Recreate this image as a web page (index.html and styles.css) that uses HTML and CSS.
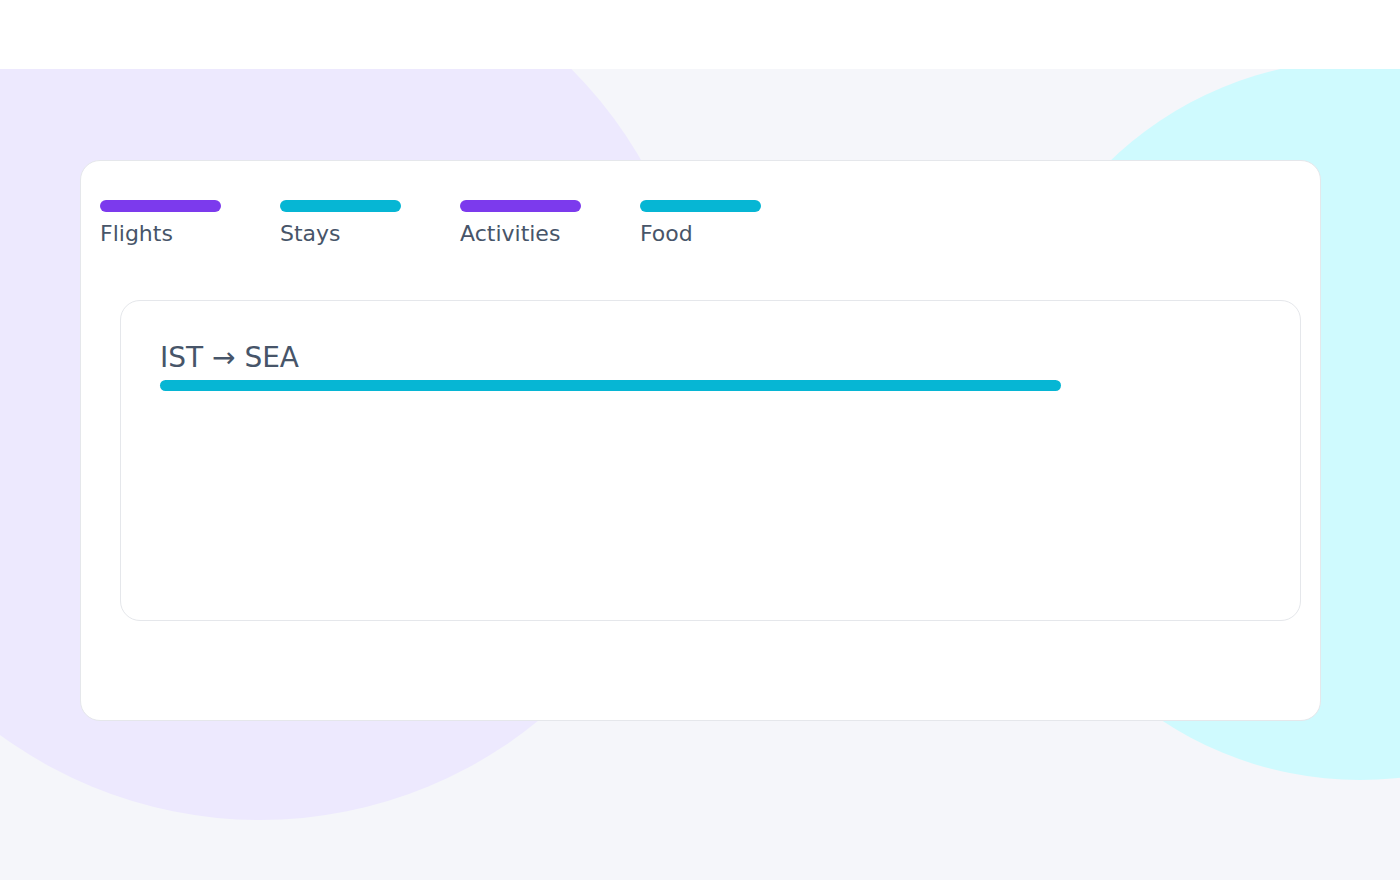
FILE: index.html
```html
<!DOCTYPE html>
<html lang="en">
<head>
<meta charset="utf-8">
<title>Trip budget</title>
<link rel="stylesheet" href="styles.css">
</head>
<body>
<header class="topbar"></header>
<div class="backdrop">
  <div class="blob blob-purple"></div>
  <div class="blob blob-cyan"></div>
</div>
<main class="stage">
  <section class="card">
    <ul class="legend">
      <li class="legend-item"><span class="swatch swatch-purple"></span><span class="legend-label">Flights</span></li>
      <li class="legend-item"><span class="swatch swatch-cyan"></span><span class="legend-label">Stays</span></li>
      <li class="legend-item"><span class="swatch swatch-purple"></span><span class="legend-label">Activities</span></li>
      <li class="legend-item"><span class="swatch swatch-cyan"></span><span class="legend-label">Food</span></li>
    </ul>
    <div class="route-card">
      <h2 class="route-title">IST → SEA</h2>
      <div class="route-bar"></div>
    </div>
  </section>
</main>
</body>
</html>
```
FILE: styles.css
```css
* { box-sizing: border-box; }
html, body {
  margin: 0;
  height: 880px;
  overflow: hidden;
}
body {
  background: #f5f6fa;
  font-family: "DejaVu Sans", "Liberation Sans", sans-serif;
  color: #475569;
  position: relative;
}
.topbar {
  height: 69px;
  background: #ffffff;
  position: relative;
  z-index: 2;
}
.backdrop {
  position: absolute;
  inset: 0;
  overflow: hidden;
  z-index: 0;
}
.blob {
  position: absolute;
  border-radius: 50%;
}
.blob-purple {
  width: 880px;
  height: 880px;
  left: -180px;
  top: -60px;
  background: #ede9fe;
}
.blob-cyan {
  width: 720px;
  height: 720px;
  left: 1000px;
  top: 60px;
  background: #cffafe;
}
.stage {
  position: relative;
  z-index: 1;
  padding: 91px 0 0 80px;
}
.card {
  width: 1241px;
  height: 561px;
  background: #ffffff;
  border: 1px solid #e5e7eb;
  border-radius: 20px;
  padding: 39px 19px 0 19px;
}
.legend {
  list-style: none;
  margin: 0;
  padding: 0;
  display: flex;
}
.legend-item {
  width: 180px;
  display: flex;
  flex-direction: column;
  gap: 9px;
}
.swatch {
  display: block;
  width: 121px;
  height: 12px;
  border-radius: 6px;
}
.swatch-purple { background: #7c3aed; }
.swatch-cyan { background: #06b6d4; }
.legend-label {
  font-size: 22px;
  line-height: 26px;
}
.route-card {
  margin: 53px 0 0 20px;
  width: 1181px;
  height: 321px;
  border: 1px solid #e5e7eb;
  border-radius: 20px;
  padding: 41px 39px;
}
.route-title {
  margin: 0;
  font-size: 28px;
  line-height: 32px;
  font-weight: normal;
}
.route-bar {
  margin-top: 6px;
  width: 901px;
  height: 11px;
  border-radius: 6px;
  background: #06b6d4;
}
```
